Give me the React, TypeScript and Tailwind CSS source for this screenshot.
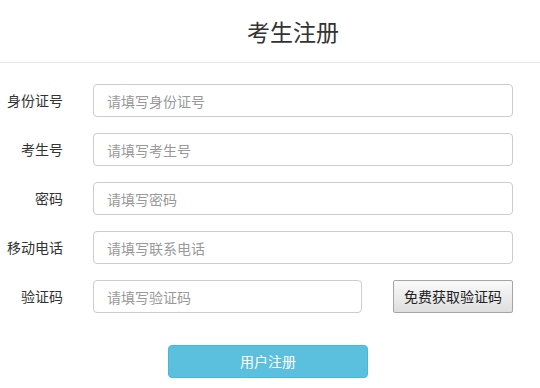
const fields = [
  { label: "身份证号", placeholder: "请填写身份证号" },
  { label: "考生号", placeholder: "请填写考生号" },
  { label: "密码", placeholder: "请填写密码" },
  { label: "移动电话", placeholder: "请填写联系电话" },
];

export default function App() {
  return (
    <div className="h-[388px] w-[540px] bg-white font-['Noto_Sans_CJK_SC',sans-serif] text-[#333]">
      {/* Header */}
      <div className="flex h-[63px] items-center justify-center border-b border-[#e8e8e8] pl-[46px]">
        <h1 className="text-[23px] leading-none">考生注册</h1>
      </div>

      {/* Form */}
      <div className="flex flex-col gap-[16px] pt-[21px]">
        {fields.map((f) => (
          <div key={f.label} className="flex h-[33px] items-center gap-[30px]">
            <label className="w-[63px] text-right text-[14px]">{f.label}</label>
            <input
              className="h-[33px] w-[420px] rounded-[4px] border border-[#ccc] px-[13px] text-[14px] outline-none placeholder:text-[#999]"
              placeholder={f.placeholder}
            />
          </div>
        ))}
        <div className="flex h-[33px] items-center gap-[30px]">
          <label className="w-[63px] text-right text-[14px]">验证码</label>
          <input
            className="h-[33px] w-[269px] rounded-[4px] border border-[#ccc] px-[13px] text-[14px] outline-none placeholder:text-[#999]"
            placeholder="请填写验证码"
          />
          <button className="ml-[1px] h-[33px] w-[120px] rounded-[2px] border border-[#a5a5a5] bg-gradient-to-b from-[#fafafa] to-[#dedede] text-[14px] text-[#222]">
            免费获取验证码
          </button>
        </div>
      </div>

      {/* Submit */}
      <div className="flex justify-center pt-[32px] pl-[-4px]">
        <button className="ml-[-4px] h-[33px] w-[200px] rounded-[4px] border border-[#46b8da] bg-[#5bc0de] text-[14px] text-white">
          用户注册
        </button>
      </div>
    </div>
  );
}
